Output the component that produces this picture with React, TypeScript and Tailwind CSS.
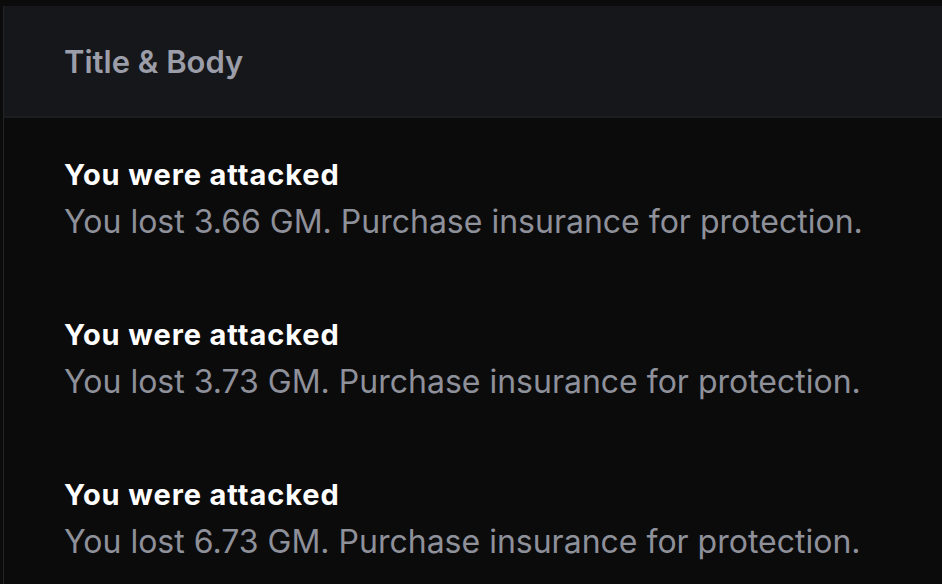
const rows = ["3.66", "3.73", "6.73"];

export default function App() {
  return (
    <div
      className="h-[584px] w-[942px] overflow-hidden bg-[#0b0b0c] pt-[6px] pl-[3px]"
      style={{ fontFamily: "Inter, 'Noto Sans', sans-serif" }}
    >
      <div className="h-full border-l border-[#222327]">
        <div className="flex h-[112px] items-center border-b-2 border-[#1c1d20] bg-[#16171a] pl-[60px] pt-[2px]">
          <span className="text-[31px] leading-[38px] font-semibold text-[#9b9da8]">Title &amp; Body</span>
        </div>
        <div className="flex flex-col pl-[60px] pt-[39px]">
          {rows.map((n, i) => (
            <div key={i} className="flex h-[160px] flex-col">
              <span className="text-[29px] leading-[36px] font-bold tracking-[0.9px] text-white">
                You were attacked
              </span>
              <span className="mt-[10px] text-[32px] leading-[38px] text-[#8e909a]">
                You lost {n} GM. Purchase insurance for protection.
              </span>
            </div>
          ))}
        </div>
      </div>
    </div>
  );
}
